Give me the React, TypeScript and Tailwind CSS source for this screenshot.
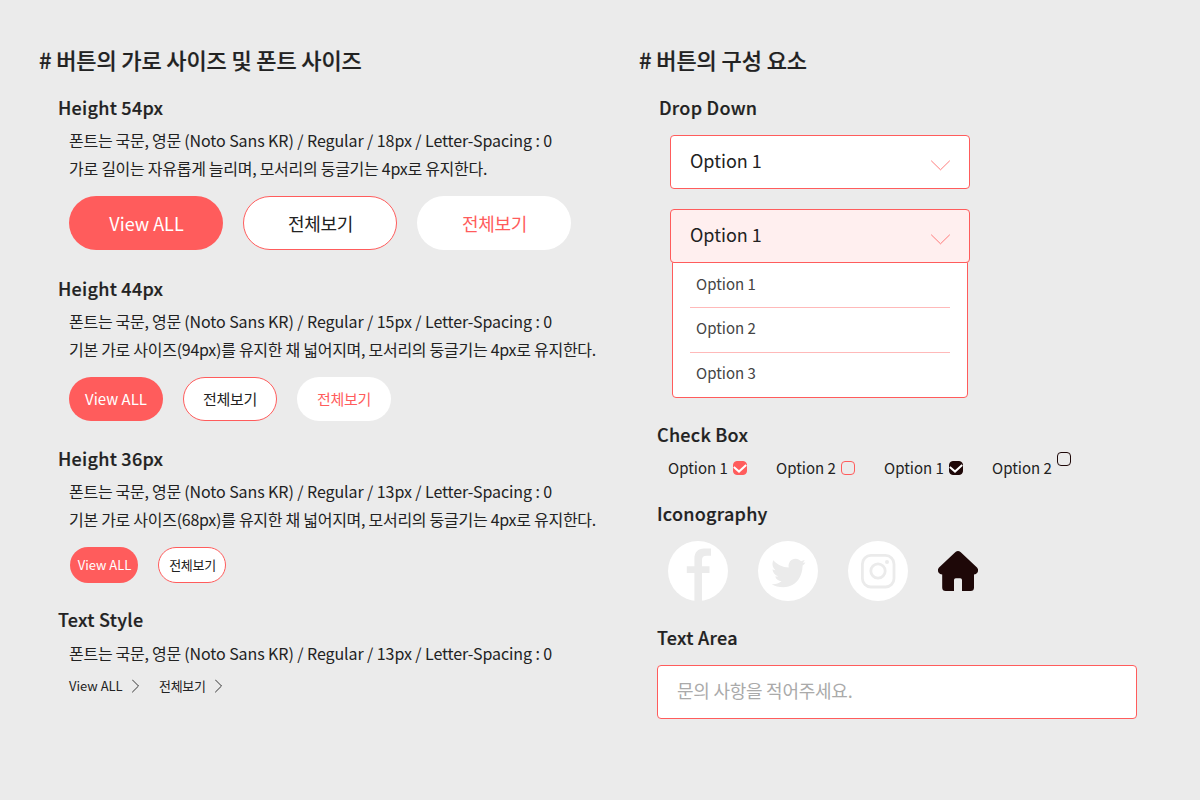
import React from "react";

type ButtonSize = "lg" | "md" | "sm";
type ButtonTone = "filled" | "outline" | "plain";

const sizes: Record<ButtonSize, string> = {
  lg: "h-[54px] w-[154px] pl-px text-[18px]",
  md: "h-11 w-[94px] text-[15px]",
  sm: "h-9 w-[68px] pl-px text-[13px]",
};

const tones: Record<ButtonTone, string> = {
  filled: "bg-[#ff5c5c] text-white",
  outline: "border border-[#ff5c5c] bg-white tracking-[-0.3px] text-[#222]",
  plain: "bg-white tracking-[-0.3px] text-[#ff5c5c]",
};

function Pill({ size, tone, children }: { size: ButtonSize; tone: ButtonTone; children: React.ReactNode }) {
  return (
    <button className={`flex items-center justify-center rounded-full whitespace-nowrap ${sizes[size]} ${tones[tone]}`}>
      {children}
    </button>
  );
}

function Heading({ children }: { children: React.ReactNode }) {
  return <h2 className="h-7 text-[18px] leading-7 font-medium tracking-[0.27px] [-webkit-text-stroke:0.2px_#222]">{children}</h2>;
}

function Note({ children }: { children: React.ReactNode }) {
  return <p className="h-7 text-[16px] leading-7 tracking-[-0.28px]">{children}</p>;
}

function FontNote({ size }: { size: string }) {
  return (
    <Note>
      {"폰트는 국문, 영문 "}
      <span className="tracking-[-0.08px]">{`(Noto Sans KR) / Regular / ${size} / Letter-Spacing : 0`}</span>
    </Note>
  );
}

function ArrowLink({ className, children }: { className: string; children: React.ReactNode }) {
  return (
    <a className={`flex items-center justify-between text-[13px] leading-5 ${className}`}>
      {children}
      <svg width="8" height="14" viewBox="0 0 8 14" fill="none" stroke="#222" strokeWidth="0.9">
        <path d="M0.2 0.7 L6.5 7 L0.2 13.3" />
      </svg>
    </a>
  );
}

function Select({ open = false }: { open?: boolean }) {
  return (
    <div
      className={`relative flex h-[54px] w-[300px] items-center justify-between rounded-[4px] border border-[#ff5c5c] pr-[19px] pl-[19px] text-[18px] ${open ? "bg-[#ffefef]" : "bg-white"}`}
    >
      <span className="-mt-1">Option 1</span>
      <svg className="mt-1.5" width="20" height="11" viewBox="0 0 20 11" fill="none" stroke="#ff5c5c" strokeWidth="0.8">
        <path d="M1.2 0.7 L10.5 9.8 L19.8 0.7" />
      </svg>
    </div>
  );
}

function Check({ color, checked = false }: { color: string; checked?: boolean }) {
  return (
    <svg width="14" height="14" viewBox="0 0 14 14" fill="none">
      <rect x="0.5" y="0.5" width="13" height="13" rx="3.5" fill={checked ? color : "none"} stroke={color} />
      {checked && <path d="M0.8 6 L6 10.6 L13.2 4" stroke="#fff" strokeWidth="2" />}
    </svg>
  );
}

export default function App() {
  return (
    <main className="flex h-[800px] w-[1200px] overflow-hidden bg-[#ebebeb] pt-[43px] pl-[39px] font-['Noto_Sans_CJK_KR',sans-serif] whitespace-nowrap text-[#222]">
      <div className="w-[600px]">
        <h1 className="h-8 text-[22px] leading-8 font-medium tracking-[-0.14px] [-webkit-text-stroke:0.2px_#222]">{"# 버튼의 가로 사이즈 및 폰트 사이즈"}</h1>

        <section className="mt-[18px] h-[181px] pl-[19px]">
          <Heading>Height 54px</Heading>
          <div className="mt-[5px] pl-[11px]">
            <FontNote size="18px" />
            <Note>가로 길이는 자유롭게 늘리며, 모서리의 둥글기는 4px로 유지한다.</Note>
            <div className="mt-3.5 flex gap-5">
              <Pill size="lg" tone="filled">View ALL</Pill>
              <Pill size="lg" tone="outline">전체보기</Pill>
              <Pill size="lg" tone="plain">전체보기</Pill>
            </div>
          </div>
        </section>

        <section className="h-[170px] pl-[19px]">
          <Heading>Height 44px</Heading>
          <div className="mt-[5px] pl-[11px]">
            <FontNote size="15px" />
            <Note>기본 가로 사이즈(94px)를 유지한 채 넓어지며, 모서리의 둥글기는 4px로 유지한다.</Note>
            <div className="mt-3.5 flex gap-5">
              <Pill size="md" tone="filled">View ALL</Pill>
              <Pill size="md" tone="outline">전체보기</Pill>
              <Pill size="md" tone="plain">전체보기</Pill>
            </div>
          </div>
        </section>

        <section className="h-[161px] pl-[19px]">
          <Heading>Height 36px</Heading>
          <div className="mt-[5px] pl-[11px]">
            <FontNote size="13px" />
            <Note>기본 가로 사이즈(68px)를 유지한 채 넓어지며, 모서리의 둥글기는 4px로 유지한다.</Note>
            <div className="mt-3.5 flex gap-5 pl-px">
              <Pill size="sm" tone="filled">View ALL</Pill>
              <Pill size="sm" tone="outline">전체보기</Pill>
            </div>
          </div>
        </section>

        <section className="pl-[19px]">
          <Heading>Text Style</Heading>
          <div className="mt-1.5 pl-[11px]">
            <FontNote size="13px" />
            <div className="mt-[9px] flex gap-[19px]">
              <ArrowLink className="w-[71px]">View ALL</ArrowLink>
              <ArrowLink className="w-[64px] tracking-[-0.3px]">전체보기</ArrowLink>
            </div>
          </div>
        </section>
      </div>

      <div className="w-[520px]">
        <h1 className="h-8 text-[22px] leading-8 font-medium tracking-[-0.1px] [-webkit-text-stroke:0.2px_#222]">{"# 버튼의 구성 요소"}</h1>

        <section className="mt-[18px] h-[327px] pl-5">
          <Heading>Drop Down</Heading>
          <div className="mt-3.5 pl-[11px]">
            <Select />
            <div className="mt-5">
              <Select open />
              <ul className="mx-0.5 -mt-px h-[136px] w-[296px] rounded-[4px] rounded-t-none border border-[#ff5c5c] bg-white px-[17px] text-[15px] text-[#444]">
                <li className="h-[45px] border-b border-[#ffb9b9] pl-1.5 leading-[42px]">Option 1</li>
                <li className="h-[45px] border-b border-[#ffb9b9] pl-1.5 leading-[40px]">Option 2</li>
                <li className="h-11 pl-1.5 leading-[40px]">Option 3</li>
              </ul>
            </div>
          </div>
        </section>

        <section className="h-[79px] pl-[18px]">
          <Heading>Check Box</Heading>
          <div className="mt-2 flex pl-[11px] text-[15px] leading-6">
            <div className="flex w-[108px] items-center gap-[5px]">Option 1 <Check color="#ff5c5c" checked /></div>
            <div className="flex w-[108px] items-center gap-[5px]">Option 2 <Check color="#ff5c5c" /></div>
            <div className="flex w-[108px] items-center gap-[5px]">Option 1 <Check color="#1e0808" checked /></div>
            <div className="flex w-[108px] items-start gap-[5px]">Option 2 <div className="-mt-1"><Check color="#1e0808" /></div></div>
          </div>
        </section>

        <section className="h-[124px] pl-[18px]">
          <Heading>Iconography</Heading>
          <div className="mt-3.5 flex items-center gap-[30px] pl-[11px]">
            <svg width="60" height="60" viewBox="0 0 60 60">
              <circle cx="30" cy="30" r="30" fill="#fff" />
              <path fill="#ebebeb" d="M26.4 60V32H18.8V25.2H26.4V18C26.4 11 30 7.5 36 7.5H43V14.7H38.5C35.5 14.7 34 16 34 19V25.2H41.5V32H34V60Z" />
            </svg>
            <svg width="60" height="60" viewBox="0 0 60 60">
              <circle cx="30" cy="30" r="30" fill="#fff" />
              <path fill="#ebebeb" d="M15.4 19.3C19.5 24 24.5 26.3 30.7 26.6C29.8 21.8 33 17.8 37.5 17.8C39.8 17.8 41.5 18.7 43 20.2C44.4 19.8 45.8 19.4 46.6 18.7C46.3 20 45.7 20.8 44.7 21.7L47.4 21.4C46.8 22.6 45.8 23.5 44.6 24.6C44.4 37.5 36.5 46.2 25.5 46.2C20.8 46.2 16.8 45.1 13.6 43.2C17.5 43.4 20.9 42.5 23.6 40.3C20.3 39.8 18.2 38.2 17.2 35.4C18.3 35.6 19.2 35.6 20.2 35.2C16.7 34.1 14.7 31.6 14.5 28.2C15.5 28.8 16.5 29.1 17.6 29.2C14.4 26.6 13.6 22.9 15.4 19.3Z" />
            </svg>
            <svg width="60" height="60" viewBox="0 0 60 60" fill="none" stroke="#ebebeb" strokeWidth="2.8">
              <circle cx="30" cy="30" r="30" fill="#fff" stroke="none" />
              <rect x="14.4" y="14.4" width="31.6" height="31.6" rx="8.5" />
              <circle cx="30" cy="30" r="7.2" />
              <circle cx="39" cy="21" r="2" fill="#ebebeb" stroke="none" />
            </svg>
            <svg width="40" height="40" viewBox="0 0 40 40" fill="#1e0808">
              <path d="M17.5 1Q20 -1 22.5 1L39 16.5Q41 19 39.5 21.5Q38.2 23.5 36 23.5V36.5Q36 40 32.5 40H24V29Q24 27.2 22.2 27.2H17.8Q16 27.2 16 29V40H7.7Q4.2 40 4.2 36.5V23.5Q1.8 23.5 0.5 21.5Q-1 19 1 16.5Z" />
            </svg>
          </div>
        </section>

        <section className="pl-[18px]">
          <Heading>Text Area</Heading>
          <input
            className="mt-3.5 block h-[54px] w-[480px] rounded-[4px] border border-[#ff5c5c] bg-white px-[19px] pb-1 text-[18px] tracking-[-0.25px] placeholder:text-[#aaa]"
            placeholder="문의 사항을 적어주세요."
          />
        </section>
      </div>
    </main>
  );
}
